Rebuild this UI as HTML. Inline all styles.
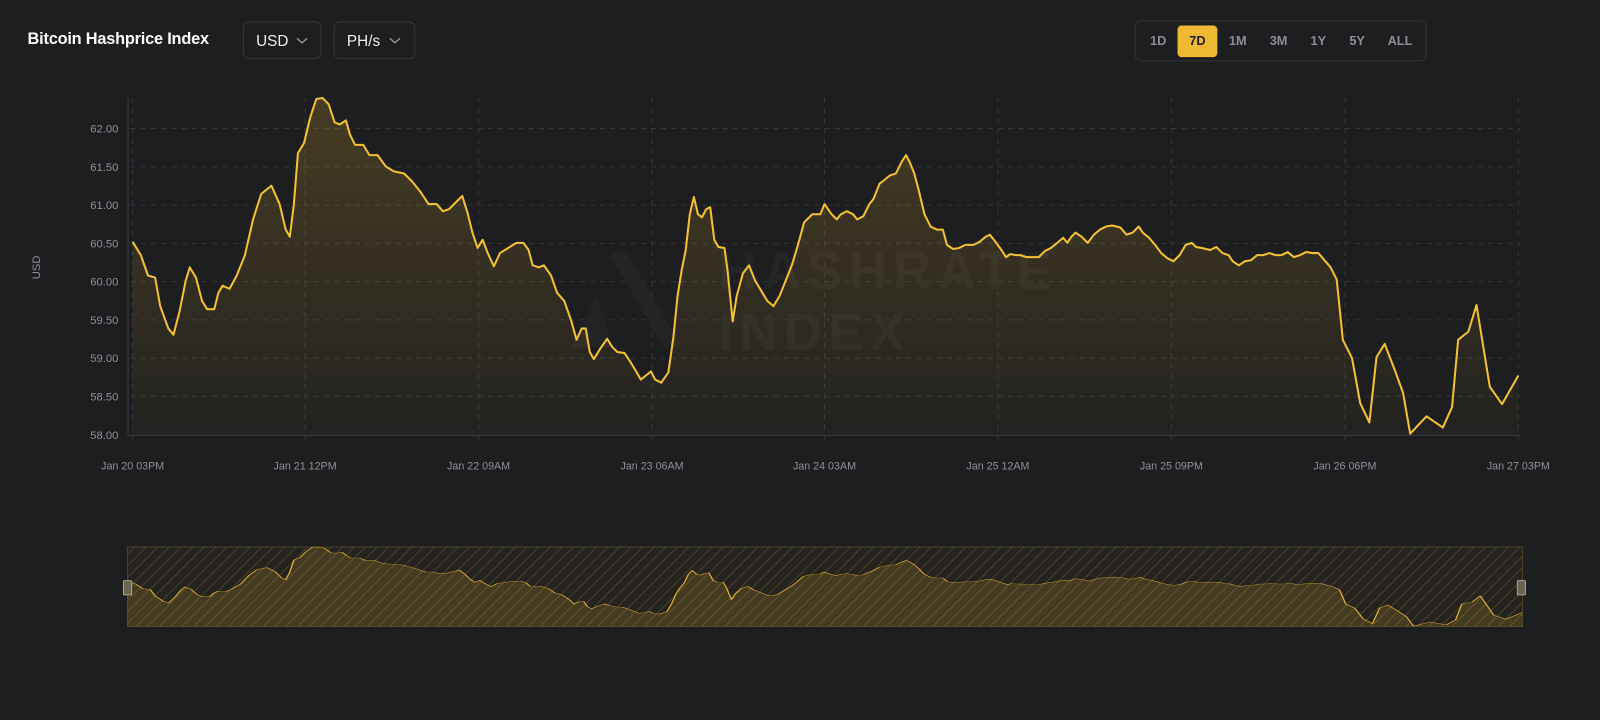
<!DOCTYPE html>
<html><head><meta charset="utf-8"><style>
html,body{margin:0;padding:0;background:#1d1e20;overflow:hidden;width:1600px;height:720px}
#w{position:absolute;left:0;top:0;width:1568px;height:706px;transform:scale(1.0204);transform-origin:0 0;font-family:"Liberation Sans",sans-serif}
.t{position:absolute;left:27px;top:30px;color:#fff;font-weight:bold;font-size:16px;letter-spacing:-0.2px}
.dd{position:absolute;top:21px;height:37px;border:1px solid #34363a;border-radius:6px;color:#eee;font-size:15px;line-height:37px;box-sizing:border-box;padding-left:12px}
.dd svg{position:absolute;top:14px}
.rg{position:absolute;left:1112px;top:20px;width:286px;height:40px;border:1px solid #303236;border-radius:6px;box-sizing:border-box}
.rg span{position:absolute;top:4px;height:31px;line-height:31px;font-size:12.5px;font-weight:bold;color:#8b8e94;text-align:center}
</style></head><body><div id="w">
<div class="t">Bitcoin Hashprice Index</div>
<div class="dd" style="left:238px;width:77px">USD<svg style="left:51px" width="12" height="8" viewBox="0 0 12 8"><path d="M1 1.5l5 4.5 5-4.5" fill="none" stroke="#999" stroke-width="1.3"/></svg></div>
<div class="dd" style="left:327px;width:80px">PH/s<svg style="left:53px" width="12" height="8" viewBox="0 0 12 8"><path d="M1 1.5l5 4.5 5-4.5" fill="none" stroke="#999" stroke-width="1.3"/></svg></div>
<div class="rg">
<span style="left:8px;width:28px">1D</span>
<span style="left:41px;width:39px;background:#f0b933;color:#1d1e20;border-radius:4px;font-weight:bold">7D</span>
<span style="left:84px;width:32px">1M</span>
<span style="left:124px;width:32px">3M</span>
<span style="left:164px;width:30px">1Y</span>
<span style="left:201px;width:32px">5Y</span>
<span style="left:240px;width:38px">ALL</span>
</div>
<svg style="position:absolute;left:0;top:0" width="1568" height="706" font-family="Liberation Sans,sans-serif">
<defs>
<linearGradient id="g" x1="0" y1="0" x2="0" y2="1"><stop offset="0" stop-color="#f0b933" stop-opacity="0.2"/><stop offset="1" stop-color="#f0b933" stop-opacity="0.03"/></linearGradient>
<pattern id="h" width="8" height="8" patternUnits="userSpaceOnUse" patternTransform="rotate(45)"><rect width="8" height="8" fill="#242320"/><line x1="0" y1="0" x2="0" y2="8" stroke="#554a28" stroke-width="1.5"/></pattern>
<path id="p" d="M130,237 L138,250 145,270 152,272 157,300 165,322 170,328 176,305 182,275 186,262 192,272 198,295 203,303 210,303 214,287 218,280 225,283 232,270 240,250 248,215 256,190 266,182 274,200 280,225 284,232 288,200 292,150 298,140 304,115 310,97 316,96 322,102 328,120 333,122 339,118 343,132 348,142 356,142 362,152 370,152 378,163 386,168 396,170 404,178 412,188 420,200 428,200 434,207 440,205 448,197 453,192 458,208 463,228 468,243 473,235 478,248 484,261 490,248 498,243 506,238 513,238 518,245 522,260 528,262 533,260 540,270 546,287 553,295 560,315 565,333 570,322 574,322 578,345 582,352 588,342 595,332 600,340 605,345 612,346 618,355 624,365 628,372 633,368 638,364 642,372 648,375 655,365 660,330 664,290 668,265 672,245 676,210 680,193 684,210 688,213 692,205 696,203 700,235 704,242 710,243 713,265 718,315 722,290 728,268 734,260 740,275 746,285 752,295 758,300 764,290 770,275 776,260 782,240 788,218 796,210 804,210 808,200 815,210 820,215 824,210 830,207 836,210 840,215 846,212 852,200 856,195 862,180 866,177 872,172 878,170 884,158 888,152 892,160 896,170 900,185 906,210 912,222 918,225 924,225 928,240 934,244 940,243 946,240 954,240 960,237 966,232 970,230 974,235 980,243 986,252 990,249 996,250 1000,250 1006,252 1012,252 1018,252 1024,246 1030,243 1036,238 1042,233 1046,238 1050,232 1054,228 1060,232 1066,238 1072,230 1078,225 1084,222 1090,221 1098,223 1104,230 1110,228 1116,222 1120,228 1126,233 1132,240 1138,248 1144,253 1150,256 1156,250 1162,240 1168,238 1172,242 1178,243 1186,245 1192,242 1198,248 1204,250 1208,256 1214,260 1220,256 1226,255 1232,250 1238,250 1244,248 1250,250 1256,250 1262,247 1268,252 1274,250 1280,247 1286,248 1292,248 1298,255 1304,262 1310,274 1316,333 1325,351 1333,395 1342,414 1349,350 1357,337 1367,363 1375,385 1382,425 1398,408 1414,419 1423,399 1429,333 1439,325 1447,299 1460,379 1472,396 1488,368"/>
<path id="f" d="M130,426 L130,237 L138,250 145,270 152,272 157,300 165,322 170,328 176,305 182,275 186,262 192,272 198,295 203,303 210,303 214,287 218,280 225,283 232,270 240,250 248,215 256,190 266,182 274,200 280,225 284,232 288,200 292,150 298,140 304,115 310,97 316,96 322,102 328,120 333,122 339,118 343,132 348,142 356,142 362,152 370,152 378,163 386,168 396,170 404,178 412,188 420,200 428,200 434,207 440,205 448,197 453,192 458,208 463,228 468,243 473,235 478,248 484,261 490,248 498,243 506,238 513,238 518,245 522,260 528,262 533,260 540,270 546,287 553,295 560,315 565,333 570,322 574,322 578,345 582,352 588,342 595,332 600,340 605,345 612,346 618,355 624,365 628,372 633,368 638,364 642,372 648,375 655,365 660,330 664,290 668,265 672,245 676,210 680,193 684,210 688,213 692,205 696,203 700,235 704,242 710,243 713,265 718,315 722,290 728,268 734,260 740,275 746,285 752,295 758,300 764,290 770,275 776,260 782,240 788,218 796,210 804,210 808,200 815,210 820,215 824,210 830,207 836,210 840,215 846,212 852,200 856,195 862,180 866,177 872,172 878,170 884,158 888,152 892,160 896,170 900,185 906,210 912,222 918,225 924,225 928,240 934,244 940,243 946,240 954,240 960,237 966,232 970,230 974,235 980,243 986,252 990,249 996,250 1000,250 1006,252 1012,252 1018,252 1024,246 1030,243 1036,238 1042,233 1046,238 1050,232 1054,228 1060,232 1066,238 1072,230 1078,225 1084,222 1090,221 1098,223 1104,230 1110,228 1116,222 1120,228 1126,233 1132,240 1138,248 1144,253 1150,256 1156,250 1162,240 1168,238 1172,242 1178,243 1186,245 1192,242 1198,248 1204,250 1208,256 1214,260 1220,256 1226,255 1232,250 1238,250 1244,248 1250,250 1256,250 1262,247 1268,252 1274,250 1280,247 1286,248 1292,248 1298,255 1304,262 1310,274 1316,333 1325,351 1333,395 1342,414 1349,350 1357,337 1367,363 1375,385 1382,425 1398,408 1414,419 1423,399 1429,333 1439,325 1447,299 1460,379 1472,396 1488,368 L1488,426 Z"/>
</defs>
<g stroke="#34363a" stroke-dasharray="5,5" stroke-width="1">
<line x1="128" y1="126" x2="1490" y2="126"/><line x1="128" y1="163.5" x2="1490" y2="163.5"/><line x1="128" y1="201" x2="1490" y2="201"/><line x1="128" y1="238.5" x2="1490" y2="238.5"/><line x1="128" y1="276" x2="1490" y2="276"/><line x1="128" y1="313.5" x2="1490" y2="313.5"/><line x1="128" y1="351" x2="1490" y2="351"/><line x1="128" y1="388.5" x2="1490" y2="388.5"/>
<line x1="130" y1="96" x2="130" y2="434"/><line x1="299" y1="96" x2="299" y2="434"/><line x1="469" y1="96" x2="469" y2="434"/><line x1="639" y1="96" x2="639" y2="434"/><line x1="808" y1="96" x2="808" y2="434"/><line x1="978" y1="96" x2="978" y2="434"/><line x1="1148" y1="96" x2="1148" y2="434"/><line x1="1318" y1="96" x2="1318" y2="434"/><line x1="1488" y1="96" x2="1488" y2="434"/>
</g>
<line x1="125.5" y1="96" x2="125.5" y2="426" stroke="#3a3c40"/>
<line x1="125" y1="426.5" x2="1490" y2="426.5" stroke="#3a3c40"/>
<g fill="#232426"><path d="M598,250 L612,244 L668,340 L650,340 Z"/><path d="M560,340 L585,290 L600,340 Z"/></g>
<g fill="#242526" font-size="52" font-weight="bold" letter-spacing="6"><text x="704" y="283">HASHRATE</text><text x="704" y="343">INDEX</text></g>
<use href="#f" fill="url(#g)" stroke="none"/>
<use href="#p" fill="none" stroke="#f5c131" stroke-width="2" stroke-linejoin="round"/>
<g fill="#8d9096" font-size="11" text-anchor="end">
<text x="116" y="130">62.00</text><text x="116" y="167.5">61.50</text><text x="116" y="205">61.00</text><text x="116" y="242.5">60.50</text><text x="116" y="280">60.00</text><text x="116" y="317.5">59.50</text><text x="116" y="355">59.00</text><text x="116" y="392.5">58.50</text><text x="116" y="430">58.00</text>
</g>
<text transform="translate(39,262) rotate(-90)" fill="#8d9096" font-size="11" text-anchor="middle">USD</text>
<g fill="#8d9096" font-size="10.5" text-anchor="middle">
<text x="130" y="460">Jan 20 03PM</text><text x="299" y="460">Jan 21 12PM</text><text x="469" y="460">Jan 22 09AM</text><text x="639" y="460">Jan 23 06AM</text><text x="808" y="460">Jan 24 03AM</text><text x="978" y="460">Jan 25 12AM</text><text x="1148" y="460">Jan 25 09PM</text><text x="1318" y="460">Jan 26 06PM</text><text x="1488" y="460">Jan 27 03PM</text>
</g>
<rect x="125" y="536" width="1367" height="78" fill="url(#h)" stroke="#4a4228"/>
<g transform="translate(125,536) scale(1.0066,0.236) translate(-130,-96)">
<use href="#f" fill="#f0b933" fill-opacity="0.16" stroke="none"/>
<use href="#p" fill="none" stroke="#e8b52e" stroke-width="1.3" vector-effect="non-scaling-stroke"/>
</g>
<rect x="121" y="569" width="8" height="14" rx="1" fill="#6b6450" stroke="#aaa38a"/>
<rect x="1487" y="569" width="8" height="14" rx="1" fill="#6b6450" stroke="#aaa38a"/>
</svg>
</div></body></html>
